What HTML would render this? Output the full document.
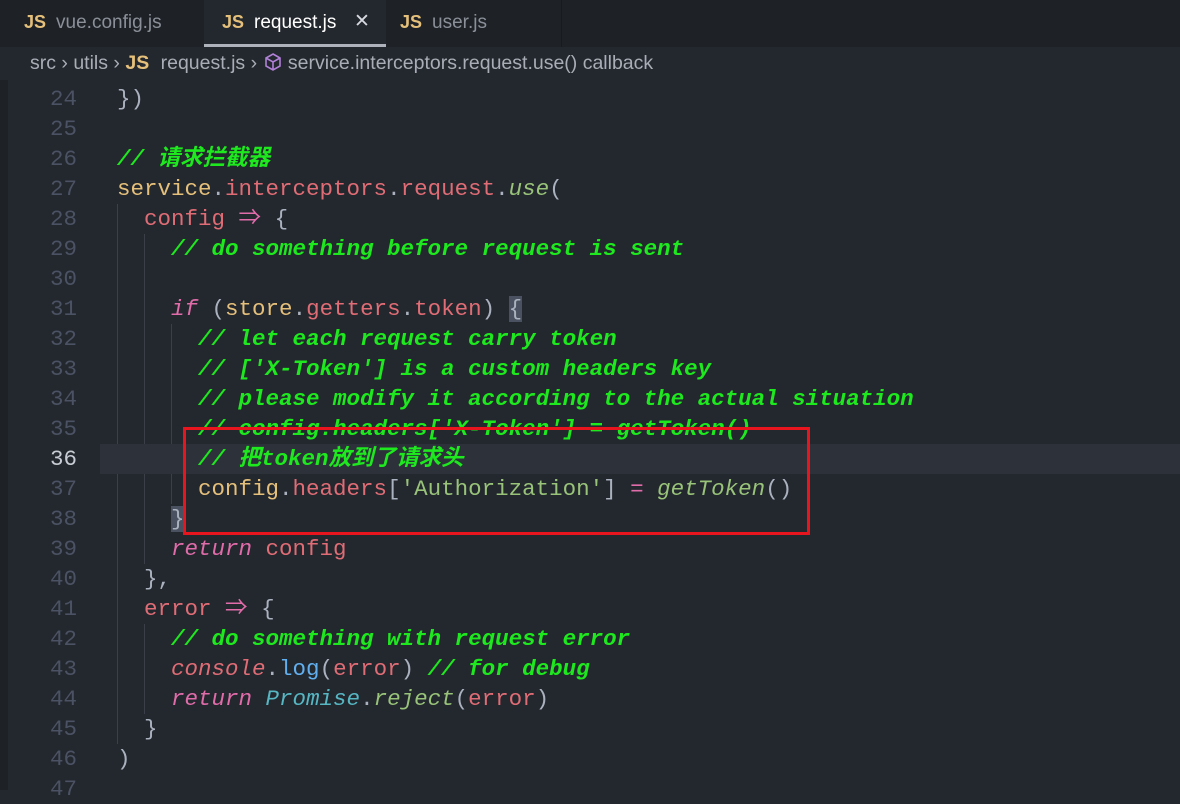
<!DOCTYPE html>
<html><head><meta charset="utf-8"><style>
body{margin:0;width:1180px;height:790px;overflow:hidden;background:#23272e;font-family:"Liberation Sans",sans-serif;position:relative}
.tabs{position:absolute;left:0;top:0;width:1180px;height:47px;background:#1e2227}
.tab{position:absolute;top:0;height:47px;line-height:44px;font-size:19px;color:#8a8f98}
.tab b{color:#e5c07b;font-weight:bold;margin-right:10px;font-size:18px}
.act{background:#23272e;color:#d7dae0;border-bottom:3px solid #aeb3bb;box-sizing:border-box}
.bc{position:absolute;left:30px;top:52px;font-size:19.5px;color:#a9adb5;white-space:nowrap}
.bc b{color:#e5c07b;margin-right:6px}
.code{position:absolute;left:0;top:84px;width:1180px;font-family:"Liberation Mono","Noto Sans CJK SC",monospace;font-size:22.5px}
.l{height:30px;line-height:30px;position:relative;white-space:pre;color:#abb2bf}
.n{position:absolute;left:0;width:77px;text-align:right;color:#4b5263}
.t{position:absolute;left:117px}
.cur{background:linear-gradient(to right,transparent 100px,#2c313a 100px)}
.cur .n{color:#c8ccd4}
.c{color:#1ee81e;font-style:italic;font-weight:bold}
.k{color:#e06ca9;font-style:italic}
.y{color:#e5c07b}.r{color:#e06c75}.g{color:#98c379}.gi{color:#98c379;font-style:italic}.b{color:#61afef}.cy{color:#56b6c2;font-style:italic}.p{color:#e06ca9}
.gd{position:absolute;width:1px;background:#3b4048}
.box{position:absolute;left:183px;top:427px;width:621px;height:102px;border:3px solid #e8141e}
.brk{background:#4a5160}
.strip{position:absolute;left:0;top:80px;width:8px;height:710px;background:#1e2227}
</style></head><body>
<div class="tabs">
<div class="tab" style="left:0;width:204px;padding-left:24px;box-sizing:border-box"><b>JS</b>vue.config.js</div>
<div class="tab act" style="left:204px;width:182px;padding-left:18px"><b>JS</b><span style="color:#fff">request.js</span><span style="position:absolute;left:150px;color:#d7dae0">✕</span></div>
<div class="tab" style="left:386px;width:176px;padding-left:14px;box-sizing:border-box;border-right:1px solid #181a1f"><b>JS</b>user.js</div>
</div>
<div class="bc">src › utils › <b>JS</b> request.js › <svg width="20" height="20" viewBox="0 0 20 20" style="vertical-align:-3px"><path d="M10 2 L17 6 V14 L10 18 L3 14 V6 Z M3 6 L10 10 L17 6 M10 10 V18" fill="none" stroke="#b180d7" stroke-width="1.6"/></svg> service.interceptors.request.use() callback</div>
<div class="strip"></div>
<div class="gd" style="left:117px;top:204px;height:540px"></div>
<div class="gd" style="left:144px;top:234px;height:330px"></div>
<div class="gd" style="left:144px;top:624px;height:90px"></div>
<div class="gd" style="left:171px;top:324px;height:180px"></div>
<div class="code">
<div class="l"><span class="n">24</span><span class="t">})</span></div>
<div class="l"><span class="n">25</span></div>
<div class="l"><span class="n">26</span><span class="t c">// 请求拦截器</span></div>
<div class="l"><span class="n">27</span><span class="t"><span class="y">service</span>.<span class="r">interceptors</span>.<span class="r">request</span>.<span class="gi">use</span>(</span></div>
<div class="l"><span class="n">28</span><span class="t">  <span class="r">config</span> <span class="p">⇒</span> {</span></div>
<div class="l"><span class="n">29</span><span class="t">    <span class="c">// do something before request is sent</span></span></div>
<div class="l"><span class="n">30</span></div>
<div class="l"><span class="n">31</span><span class="t">    <span class="k">if</span> (<span class="y">store</span>.<span class="r">getters</span>.<span class="r">token</span>) <span class="brk">{</span></span></div>
<div class="l"><span class="n">32</span><span class="t">      <span class="c">// let each request carry token</span></span></div>
<div class="l"><span class="n">33</span><span class="t">      <span class="c">// ['X-Token'] is a custom headers key</span></span></div>
<div class="l"><span class="n">34</span><span class="t">      <span class="c">// please modify it according to the actual situation</span></span></div>
<div class="l"><span class="n">35</span><span class="t">      <span class="c">// config.headers['X-Token'] = getToken()</span></span></div>
<div class="l cur"><span class="n">36</span><span class="t">      <span class="c">// 把token放到了请求头</span></span></div>
<div class="l"><span class="n">37</span><span class="t">      <span class="y">config</span>.<span class="r">headers</span>[<span class="g">'Authorization'</span>] <span class="p">=</span> <span class="gi">getToken</span>()</span></div>
<div class="l"><span class="n">38</span><span class="t">    <span class="brk">}</span></span></div>
<div class="l"><span class="n">39</span><span class="t">    <span class="k">return</span> <span class="r">config</span></span></div>
<div class="l"><span class="n">40</span><span class="t">  },</span></div>
<div class="l"><span class="n">41</span><span class="t">  <span class="r">error</span> <span class="p">⇒</span> {</span></div>
<div class="l"><span class="n">42</span><span class="t">    <span class="c">// do something with request error</span></span></div>
<div class="l"><span class="n">43</span><span class="t">    <span class="r" style="font-style:italic">console</span>.<span class="b">log</span>(<span class="r">error</span>) <span class="c">// for debug</span></span></div>
<div class="l"><span class="n">44</span><span class="t">    <span class="k">return</span> <span class="cy">Promise</span>.<span class="gi">reject</span>(<span class="r">error</span>)</span></div>
<div class="l"><span class="n">45</span><span class="t">  }</span></div>
<div class="l"><span class="n">46</span><span class="t">)</span></div>
<div class="l"><span class="n">47</span></div>
</div>
<div class="box"></div>
</body></html>
